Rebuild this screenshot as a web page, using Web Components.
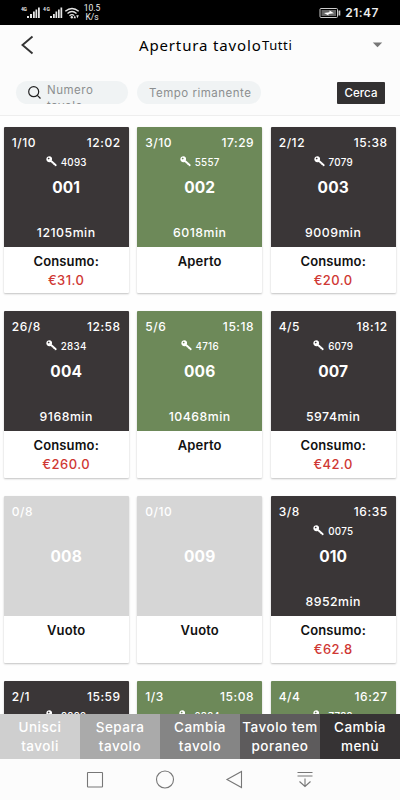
<!DOCTYPE html>
<html lang="it">
<head>
<meta charset="utf-8">
<title>Apertura tavolo</title>
<style>
  html, body {
    margin: 0;
    height: 100%;
    overflow: hidden;
    background: #fcfcfc;
    font-family: Inter, "Noto Sans", sans-serif;
  }
</style>
</head>
<body>
<tables-app></tables-app>

<script>
class StatusBar extends HTMLElement {
  constructor() {
    super();
    this.attachShadow({ mode: "open" });
    this.shadowRoot.innerHTML = `
      <style>
        :host {
          display: flex;
          align-items: center;
          box-sizing: border-box;
          height: 25px;
          padding: 1px 21px 0 20px;
          background: #000;
          color: #eee;
          font-family: Roboto, sans-serif;
        }
        svg { display: block; }
        .signals { width: 60px; height: 16px; }
        .speed {
          width: 20px;
          margin-left: 2px;
          font-size: 8.5px;
          line-height: 9px;
          text-align: center;
        }
        .battery { margin-left: auto; }
        .clock {
          margin-left: 4px;
          font: 600 12px/16px Inter, sans-serif;
          letter-spacing: 0.5px;
        }
      </style>
      <svg class="signals" viewBox="0 0 60 16" fill="#e6e6e6">
        <text x="1" y="6" font-size="5" font-weight="700" textLength="6">4G</text>
        <path d="M7 11h2v2H7zM10 9h2v4h-2zM13 6.500h1.800V13H13zM15.500 4.500h1.700V13h-1.700zM18 2.500h1.800V13H18z"/>
        <text x="23" y="6" font-size="5" font-weight="700" textLength="7">4G</text>
        <path d="M30 11h2v2h-2zM33 9h1.800v4H33zM35.500 6.500h1.700V13h-1.700zM38 4.500h1.700V13H38zM40.500 2.500h1.700V13h-1.700z"/>
        <g fill="none" stroke="#e6e6e6" stroke-width="1.400">
          <path d="M45.300 6.300Q52 .5 58.700 6.300M47.500 8.600Q52 4.600 56.500 8.600M49.500 10.700Q52 8.700 54 10.500"/>
        </g>
        <circle cx="51.800" cy="12.200" r="1.200"/>
        <path d="M53.500 13.200l1.300-3 1.200 3zM56.200 10.200h2.600l-1.300 3z"/>
      </svg>
      <div class="speed">10.5<br>K/s</div>
      <svg class="battery" width="22" height="12" viewBox="0 0 22 12">
        <rect x="1" y="1.500" width="17.500" height="9" rx="1" fill="none" stroke="#ccc"/>
        <rect x="2.500" y="3" width="14.500" height="6" fill="#666"/>
        <path d="M19.500 3.500h1.800v5h-1.800z" fill="#ccc"/>
        <path d="M5 6l5.500-.8V3.500l4.500 2.700-5.500.8v1.500z" fill="#fff"/>
      </svg>
      <div class="clock">21:47</div>
    `;
  }
}
customElements.define("status-bar", StatusBar);

class PageHeader extends HTMLElement {
  constructor() {
    super();
    this.attachShadow({ mode: "open" });
    this.shadowRoot.innerHTML = `
      <style>
        :host {
          display: grid;
          grid-template-columns: 139px 123px 1fr auto;
          align-items: center;
          box-sizing: border-box;
          height: 40px;
          padding-right: 17px;
          color: #000;
          font-family: "Noto Sans", sans-serif;
          white-space: nowrap;
        }
        svg { display: block; }
        .back { margin-left: 20px; }
        .title { font-size: 15px; letter-spacing: 0.85px; }
        .filter { font-size: 13px; letter-spacing: 0.6px; }
      </style>
      <svg class="back" width="14" height="20" viewBox="0 0 14 20">
        <path d="M12.500 1.500L2.500 10l10 8.500" fill="none" stroke="#333" stroke-width="1.900"/>
      </svg>
      <div class="title"><slot></slot></div>
      <div class="filter"><slot name="filter"></slot></div>
      <svg width="11" height="6" viewBox="0 0 11 6"><path d="M.8.5h9.400L5.500 5.300z" fill="#777"/></svg>
    `;
  }
}
customElements.define("page-header", PageHeader);

class SearchBar extends HTMLElement {
  constructor() {
    super();
    this.attachShadow({ mode: "open" });
    this.shadowRoot.innerHTML = `
      <style>
        :host {
          display: flex;
          align-items: flex-start;
          box-sizing: border-box;
          height: 51px;
          padding: 16px 15px 0 16px;
          border-bottom: 1px solid #eee;
        }
        .field {
          display: flex;
          box-sizing: border-box;
          height: 23px;
          border-radius: 12px;
          background: #f0f3f4;
          color: #8c8f90;
          font-size: 11.5px;
          letter-spacing: 0.5px;
          overflow: hidden;
        }
        .number { width: 112px; padding-left: 11px; margin-right: 9px; }
        .number svg { flex: none; margin: 4px 5px 0 0; }
        .number div { width: 60px; padding-top: 1px; line-height: 16px; }
        .time { width: 124px; padding-left: 12px; line-height: 24px; white-space: nowrap; }
        button {
          width: 48px;
          height: 22px;
          margin: 1px 0 0 auto;
          padding: 0;
          border: 0;
          border-radius: 1px;
          background: #333132;
          color: #fff;
          font: 500 11.5px/22px Inter, sans-serif;
          letter-spacing: 0.1px;
        }
      </style>
      <div class="field number">
        <svg width="15" height="15" viewBox="0 0 15 15" fill="none" stroke="#222" stroke-width="1.200">
          <circle cx="6.700" cy="6.700" r="5"/><path d="M10.300 10.300l3.200 3.200"/>
        </svg>
        <div>Numero tavolo</div>
      </div>
      <div class="field time">Tempo rimanente</div>
      <button>Cerca</button>
    `;
  }
}
customElements.define("search-bar", SearchBar);

const LABELS = { busy: "Consumo:", open: "Aperto", empty: "Vuoto" };

class TableCard extends HTMLElement {
  constructor() {
    super();
    this.attachShadow({ mode: "open" });
  }
  connectedCallback() {
    const name = this.getAttribute("name");
    const code = this.getAttribute("code");
    const key = `
      <svg width="12" height="12" viewBox="0 0 12 12">
        <path fill="#fff" fill-rule="evenodd" d="M1.300 1.200C2.700-.1 5-.1 6 1.400c.8 1.100.8 2.300.2 3.300l5.200 4.500.1 1.800-1.900.1-.2-1.300-1.300-.1-.2-1.300-1.300-.2-1.200-1.600C3.800 7.100 2.100 6.900 1.200 5.800c-1.200-1.400-1.100-3.400.1-4.600zm1.200.8a.9.900 0 1 0 1.200 1.300A.9.900 0 0 0 2.500 2z"/>
      </svg>`;
    this.shadowRoot.innerHTML = `
      <style>
        :host {
          --tile: #3a3637;
          display: block;
          height: 166.500px;
          border-radius: 1px;
          background: #fff;
          box-shadow: 0 1px 2px rgba(0, 0, 0, 0.24);
          text-align: center;
          white-space: nowrap;
        }
        :host([state="open"]) { --tile: #6d8959; }
        :host([state="empty"]) { --tile: #d6d6d6; }
        .tile {
          display: grid;
          grid-template-rows: 18px 20px 31px 1fr 17px;
          box-sizing: border-box;
          height: 120px;
          padding: 7px 8px 6px;
          border-radius: 1px 1px 0 0;
          background: var(--tile);
          color: #fff;
        }
        .top {
          display: flex;
          justify-content: space-between;
          font-size: 12px;
          font-weight: 500;
          line-height: 18px;
          letter-spacing: 0.55px;
        }
        .key {
          display: flex;
          justify-content: center;
          gap: 4px;
          font-size: 9.800px;
          font-weight: 500;
          line-height: 21px;
          letter-spacing: 0.25px;
        }
        .key svg { width: 11px; height: 11px; margin-top: 4px; }
        .name { font-size: 15.500px; font-weight: 700; line-height: 31px; letter-spacing: 0.1px; }
        .minutes { grid-row: 5; font-size: 12.300px; font-weight: 500; line-height: 17px; letter-spacing: 0.5px; }
        .label { padding-top: 4px; color: #111; font-size: 13px; font-weight: 600; line-height: 20px; letter-spacing: 0.15px; }
        .price { color: #cf3834; font-size: 13px; font-weight: 500; line-height: 18px; letter-spacing: 0.45px; }
      </style>
      <div class="tile">
        <div class="top"><span>${this.getAttribute("seats")}</span><span>${this.getAttribute("time") || ""}</span></div>
        <div class="key">${code ? key + `<span>${code}</span>` : ""}</div>
        <div class="name">${name || ""}</div>
        <div class="minutes">${this.getAttribute("minutes") || ""}</div>
      </div>
      <div class="label">${name ? LABELS[this.getAttribute("state") || "busy"] : ""}</div>
      <div class="price"><slot></slot></div>
    `;
  }
}
customElements.define("table-card", TableCard);

class ActionBar extends HTMLElement {
  constructor() {
    super();
    this.attachShadow({ mode: "open" });
    this.shadowRoot.innerHTML = `
      <style>
        :host { display: grid; grid-template-columns: repeat(5, 80px); height: 45px; }
        ::slotted(div) {
          box-sizing: border-box;
          padding-top: 4px;
          color: #fff;
          font-size: 13.5px;
          font-weight: 500;
          line-height: 19px;
          letter-spacing: 0.5px;
          text-align: center;
          white-space: nowrap;
        }
        ::slotted(:nth-child(1)) { background: #cfcfcf; }
        ::slotted(:nth-child(2)) { background: #aaa; }
        ::slotted(:nth-child(3)) { background: #858585; }
        ::slotted(:nth-child(4)) { background: #5d5b5c; }
        ::slotted(:nth-child(5)) { background: #363334; }
      </style>
      <slot></slot>
    `;
  }
}
customElements.define("action-bar", ActionBar);

class NavBar extends HTMLElement {
  constructor() {
    super();
    this.attachShadow({ mode: "open" });
    this.shadowRoot.innerHTML = `
      <style>
        :host {
          display: grid;
          grid-template-columns: repeat(4, 70px);
          justify-content: center;
          justify-items: center;
          align-items: center;
          box-sizing: border-box;
          height: 41px;
          background: #fcfcfc;
        }
        svg { fill: none; stroke: #777; stroke-width: 1.1px; }
      </style>
      <svg width="20" height="20"><rect x="2.500" y="2.500" width="15" height="14.500" rx=".5"/></svg>
      <svg width="20" height="20"><circle cx="10" cy="9.500" r="8.500"/></svg>
      <svg width="20" height="20"><path d="M2 9.500L16.500 1.500v16z"/></svg>
      <svg width="20" height="20"><path d="M2.500 2.500h15M2.500 6h15M10 8.500v8M4.500 11.500l5.500 5 5.500-5"/></svg>
    `;
  }
}
customElements.define("nav-bar", NavBar);

class TablesApp extends HTMLElement {
  constructor() {
    super();
    this.attachShadow({ mode: "open" });
    this.shadowRoot.innerHTML = `
      <style>
        :host {
          display: grid;
          grid-template-rows: 25px 40px 51px 598px 45px 41px;
          width: 400px;
          height: 800px;
          overflow: hidden;
        }
        .grid {
          display: grid;
          grid-template-columns: repeat(3, 125px);
          column-gap: 8.500px;
          row-gap: 18.200px;
          align-content: start;
          padding: 10.700px 4px 0 3.700px;
          background: #fefefe;
          overflow: hidden;
        }
      </style>
      <status-bar></status-bar>
      <page-header>Apertura tavolo<span slot="filter">Tutti</span></page-header>
      <search-bar></search-bar>
      <div class="grid">
        <table-card name="001" seats="1/10" time="12:02" code="4093" minutes="12105min">€31.0</table-card>
        <table-card name="002" seats="3/10" time="17:29" code="5557" minutes="6018min" state="open"></table-card>
        <table-card name="003" seats="2/12" time="15:38" code="7079" minutes="9009min">€20.0</table-card>
        <table-card name="004" seats="26/8" time="12:58" code="2834" minutes="9168min">€260.0</table-card>
        <table-card name="006" seats="5/6" time="15:18" code="4716" minutes="10468min" state="open"></table-card>
        <table-card name="007" seats="4/5" time="18:12" code="6079" minutes="5974min">€42.0</table-card>
        <table-card name="008" seats="0/8" state="empty"></table-card>
        <table-card name="009" seats="0/10" state="empty"></table-card>
        <table-card name="010" seats="3/8" time="16:35" code="0075" minutes="8952min">€62.8</table-card>
        <table-card seats="2/1" time="15:59" code="2829"></table-card>
        <table-card seats="1/3" time="15:08" code="6324" state="open"></table-card>
        <table-card seats="4/4" time="16:27" code="7782" state="open"></table-card>
      </div>
      <action-bar>
        <div>Unisci<br>tavoli</div>
        <div>Separa<br>tavolo</div>
        <div>Cambia<br>tavolo</div>
        <div>Tavolo tem<br>poraneo</div>
        <div>Cambia<br>menù</div>
      </action-bar>
      <nav-bar></nav-bar>
    `;
  }
}
customElements.define("tables-app", TablesApp);
</script>
</body>
</html>
